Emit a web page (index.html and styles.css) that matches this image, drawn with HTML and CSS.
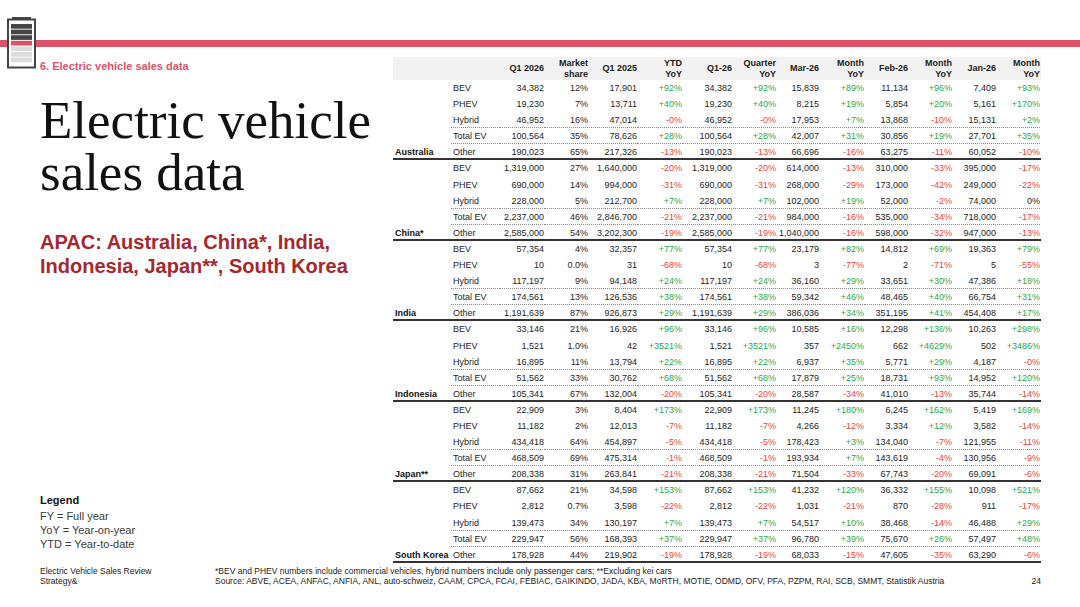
FILE: index.html
```html
<!DOCTYPE html>
<html lang="en">
<head>
<meta charset="utf-8">
<title>Electric vehicle sales data</title>
<link rel="stylesheet" href="styles.css">
</head>
<body>
<div class="band"></div>
<svg class="battery" viewBox="0 0 30 52" width="30" height="52" aria-hidden="true">
  <rect x="5" y="0" width="19" height="2.6" fill="#454545"/>
  <rect x="1" y="2.5" width="27" height="48" fill="#fff" stroke="#454545" stroke-width="2"/>
  <rect x="4" y="7" width="21" height="4.7" fill="#454545"/>
  <rect x="4" y="12.6" width="21" height="4.7" fill="#454545"/>
  <rect x="4" y="18.2" width="21" height="4.7" fill="#454545"/>
  <rect x="4" y="23.8" width="21" height="4.7" fill="#dc5269"/>
  <rect x="4" y="29.4" width="21" height="4.7" fill="#dcdcdc"/>
  <rect x="4" y="35" width="21" height="4.7" fill="#dcdcdc"/>
  <rect x="4" y="40.6" width="21" height="4.7" fill="#dcdcdc"/>
</svg>

<div class="main">
  <div class="left">
    <div class="section">6. Electric vehicle sales data</div>
    <h1 class="title"><span class="tl">Electric vehicle</span><span class="tl">sales data</span></h1>
    <h2 class="subtitle">APAC: Australia, China*, India,<br>Indonesia, Japan**, South Korea</h2>
    <div class="legend">
      <h3>Legend</h3>
      <p>FY = Full year</p>
      <p>YoY = Year-on-year</p>
      <p>YTD = Year-to-date</p>
    </div>
  </div>

  <table class="data">
    <colgroup>
      <col class="w58"><col class="w49"><col class="w45"><col class="w44"><col class="w49"><col class="w45"><col class="w50"><col class="w44"><col class="w43"><col class="w45"><col class="w44"><col class="w44"><col class="w44"><col class="w44">
    </colgroup>
    <thead>
      <tr><th></th><th></th><th>Q1 2026</th><th>Market<br>share</th><th>Q1 2025</th><th>YTD<br>YoY</th><th>Q1-26</th><th>Quarter<br>YoY</th><th>Mar-26</th><th>Month<br>YoY</th><th>Feb-26</th><th>Month<br>YoY</th><th>Jan-26</th><th>Month<br>YoY</th></tr>
    </thead>
    <tbody>
      <tr><td class="c"></td><td class="t">BEV</td><td>34,382</td><td>12%</td><td>17,901</td><td class="g">+92%</td><td>34,382</td><td class="g">+92%</td><td>15,839</td><td class="g">+89%</td><td>11,134</td><td class="g">+96%</td><td>7,409</td><td class="g">+93%</td></tr>
      <tr><td class="c"></td><td class="t">PHEV</td><td>19,230</td><td>7%</td><td>13,711</td><td class="g">+40%</td><td>19,230</td><td class="g">+40%</td><td>8,215</td><td class="g">+19%</td><td>5,854</td><td class="g">+20%</td><td>5,161</td><td class="g">+170%</td></tr>
      <tr class="dot"><td class="c"></td><td class="t">Hybrid</td><td>46,952</td><td>16%</td><td>47,014</td><td class="r">-0%</td><td>46,952</td><td class="r">-0%</td><td>17,953</td><td class="g">+7%</td><td>13,868</td><td class="r">-10%</td><td>15,131</td><td class="g">+2%</td></tr>
      <tr class="dot"><td class="c"></td><td class="t">Total EV</td><td>100,564</td><td>35%</td><td>78,626</td><td class="g">+28%</td><td>100,564</td><td class="g">+28%</td><td>42,007</td><td class="g">+31%</td><td>30,856</td><td class="g">+19%</td><td>27,701</td><td class="g">+35%</td></tr>
      <tr class="end"><td class="c">Australia</td><td class="t">Other</td><td>190,023</td><td>65%</td><td>217,326</td><td class="r">-13%</td><td>190,023</td><td class="r">-13%</td><td>66,696</td><td class="r">-16%</td><td>63,275</td><td class="r">-11%</td><td>60,052</td><td class="r">-10%</td></tr>

      <tr><td class="c"></td><td class="t">BEV</td><td>1,319,000</td><td>27%</td><td>1,640,000</td><td class="r">-20%</td><td>1,319,000</td><td class="r">-20%</td><td>614,000</td><td class="r">-13%</td><td>310,000</td><td class="r">-33%</td><td>395,000</td><td class="r">-17%</td></tr>
      <tr><td class="c"></td><td class="t">PHEV</td><td>690,000</td><td>14%</td><td>994,000</td><td class="r">-31%</td><td>690,000</td><td class="r">-31%</td><td>268,000</td><td class="r">-29%</td><td>173,000</td><td class="r">-42%</td><td>249,000</td><td class="r">-22%</td></tr>
      <tr class="dot"><td class="c"></td><td class="t">Hybrid</td><td>228,000</td><td>5%</td><td>212,700</td><td class="g">+7%</td><td>228,000</td><td class="g">+7%</td><td>102,000</td><td class="g">+19%</td><td>52,000</td><td class="r">-2%</td><td>74,000</td><td>0%</td></tr>
      <tr class="dot"><td class="c"></td><td class="t">Total EV</td><td>2,237,000</td><td>46%</td><td>2,846,700</td><td class="r">-21%</td><td>2,237,000</td><td class="r">-21%</td><td>984,000</td><td class="r">-16%</td><td>535,000</td><td class="r">-34%</td><td>718,000</td><td class="r">-17%</td></tr>
      <tr class="end"><td class="c">China*</td><td class="t">Other</td><td>2,585,000</td><td>54%</td><td>3,202,300</td><td class="r">-19%</td><td>2,585,000</td><td class="r">-19%</td><td>1,040,000</td><td class="r">-16%</td><td>598,000</td><td class="r">-32%</td><td>947,000</td><td class="r">-13%</td></tr>

      <tr><td class="c"></td><td class="t">BEV</td><td>57,354</td><td>4%</td><td>32,357</td><td class="g">+77%</td><td>57,354</td><td class="g">+77%</td><td>23,179</td><td class="g">+82%</td><td>14,812</td><td class="g">+69%</td><td>19,363</td><td class="g">+79%</td></tr>
      <tr><td class="c"></td><td class="t">PHEV</td><td>10</td><td>0.0%</td><td>31</td><td class="r">-68%</td><td>10</td><td class="r">-68%</td><td>3</td><td class="r">-77%</td><td>2</td><td class="r">-71%</td><td>5</td><td class="r">-55%</td></tr>
      <tr class="dot"><td class="c"></td><td class="t">Hybrid</td><td>117,197</td><td>9%</td><td>94,148</td><td class="g">+24%</td><td>117,197</td><td class="g">+24%</td><td>36,160</td><td class="g">+29%</td><td>33,651</td><td class="g">+30%</td><td>47,386</td><td class="g">+18%</td></tr>
      <tr class="dot"><td class="c"></td><td class="t">Total EV</td><td>174,561</td><td>13%</td><td>126,536</td><td class="g">+38%</td><td>174,561</td><td class="g">+38%</td><td>59,342</td><td class="g">+46%</td><td>48,465</td><td class="g">+40%</td><td>66,754</td><td class="g">+31%</td></tr>
      <tr class="end"><td class="c">India</td><td class="t">Other</td><td>1,191,639</td><td>87%</td><td>926,873</td><td class="g">+29%</td><td>1,191,639</td><td class="g">+29%</td><td>386,036</td><td class="g">+34%</td><td>351,195</td><td class="g">+41%</td><td>454,408</td><td class="g">+17%</td></tr>

      <tr><td class="c"></td><td class="t">BEV</td><td>33,146</td><td>21%</td><td>16,926</td><td class="g">+96%</td><td>33,146</td><td class="g">+96%</td><td>10,585</td><td class="g">+16%</td><td>12,298</td><td class="g">+136%</td><td>10,263</td><td class="g">+298%</td></tr>
      <tr><td class="c"></td><td class="t">PHEV</td><td>1,521</td><td>1.0%</td><td>42</td><td class="g">+3521%</td><td>1,521</td><td class="g">+3521%</td><td>357</td><td class="g">+2450%</td><td>662</td><td class="g">+4629%</td><td>502</td><td class="g">+3486%</td></tr>
      <tr class="dot"><td class="c"></td><td class="t">Hybrid</td><td>16,895</td><td>11%</td><td>13,794</td><td class="g">+22%</td><td>16,895</td><td class="g">+22%</td><td>6,937</td><td class="g">+35%</td><td>5,771</td><td class="g">+29%</td><td>4,187</td><td class="r">-0%</td></tr>
      <tr class="dot"><td class="c"></td><td class="t">Total EV</td><td>51,562</td><td>33%</td><td>30,762</td><td class="g">+68%</td><td>51,562</td><td class="g">+68%</td><td>17,879</td><td class="g">+25%</td><td>18,731</td><td class="g">+93%</td><td>14,952</td><td class="g">+120%</td></tr>
      <tr class="end"><td class="c">Indonesia</td><td class="t">Other</td><td>105,341</td><td>67%</td><td>132,004</td><td class="r">-20%</td><td>105,341</td><td class="r">-20%</td><td>28,587</td><td class="r">-34%</td><td>41,010</td><td class="r">-13%</td><td>35,744</td><td class="r">-14%</td></tr>

      <tr><td class="c"></td><td class="t">BEV</td><td>22,909</td><td>3%</td><td>8,404</td><td class="g">+173%</td><td>22,909</td><td class="g">+173%</td><td>11,245</td><td class="g">+180%</td><td>6,245</td><td class="g">+162%</td><td>5,419</td><td class="g">+169%</td></tr>
      <tr><td class="c"></td><td class="t">PHEV</td><td>11,182</td><td>2%</td><td>12,013</td><td class="r">-7%</td><td>11,182</td><td class="r">-7%</td><td>4,266</td><td class="r">-12%</td><td>3,334</td><td class="g">+12%</td><td>3,582</td><td class="r">-14%</td></tr>
      <tr class="dot"><td class="c"></td><td class="t">Hybrid</td><td>434,418</td><td>64%</td><td>454,897</td><td class="r">-5%</td><td>434,418</td><td class="r">-5%</td><td>178,423</td><td class="g">+3%</td><td>134,040</td><td class="r">-7%</td><td>121,955</td><td class="r">-11%</td></tr>
      <tr class="dot"><td class="c"></td><td class="t">Total EV</td><td>468,509</td><td>69%</td><td>475,314</td><td class="r">-1%</td><td>468,509</td><td class="r">-1%</td><td>193,934</td><td class="g">+7%</td><td>143,619</td><td class="r">-4%</td><td>130,956</td><td class="r">-9%</td></tr>
      <tr class="end"><td class="c">Japan**</td><td class="t">Other</td><td>208,338</td><td>31%</td><td>263,841</td><td class="r">-21%</td><td>208,338</td><td class="r">-21%</td><td>71,504</td><td class="r">-33%</td><td>67,743</td><td class="r">-20%</td><td>69,091</td><td class="r">-6%</td></tr>

      <tr><td class="c"></td><td class="t">BEV</td><td>87,662</td><td>21%</td><td>34,598</td><td class="g">+153%</td><td>87,662</td><td class="g">+153%</td><td>41,232</td><td class="g">+120%</td><td>36,332</td><td class="g">+155%</td><td>10,098</td><td class="g">+521%</td></tr>
      <tr><td class="c"></td><td class="t">PHEV</td><td>2,812</td><td>0.7%</td><td>3,598</td><td class="r">-22%</td><td>2,812</td><td class="r">-22%</td><td>1,031</td><td class="r">-21%</td><td>870</td><td class="r">-28%</td><td>911</td><td class="r">-17%</td></tr>
      <tr class="dot"><td class="c"></td><td class="t">Hybrid</td><td>139,473</td><td>34%</td><td>130,197</td><td class="g">+7%</td><td>139,473</td><td class="g">+7%</td><td>54,517</td><td class="g">+10%</td><td>38,468</td><td class="r">-14%</td><td>46,488</td><td class="g">+29%</td></tr>
      <tr class="dot"><td class="c"></td><td class="t">Total EV</td><td>229,947</td><td>56%</td><td>168,393</td><td class="g">+37%</td><td>229,947</td><td class="g">+37%</td><td>96,780</td><td class="g">+39%</td><td>75,670</td><td class="g">+26%</td><td>57,497</td><td class="g">+48%</td></tr>
      <tr class="end"><td class="c">South Korea</td><td class="t">Other</td><td>178,928</td><td>44%</td><td>219,902</td><td class="r">-19%</td><td>178,928</td><td class="r">-19%</td><td>68,033</td><td class="r">-15%</td><td>47,605</td><td class="r">-35%</td><td>63,290</td><td class="r">-6%</td></tr>
    </tbody>
  </table>
</div>

<div class="footer">
  <div class="fleft">
    <p>Electric Vehicle Sales Review</p>
    <p>Strategy&amp;</p>
  </div>
  <div class="fnote">
    <p>*BEV and PHEV numbers include commercial vehicles, hybrid numbers include only passenger cars; **Excluding kei cars</p>
    <p>Source: ABVE, ACEA, ANFAC, ANFIA, ANL, auto-schweiz, CAAM, CPCA, FCAI, FEBIAC, GAIKINDO, JADA, KBA, MoRTH, MOTIE, ODMD, OFV, PFA, PZPM, RAI, SCB, SMMT, Statistik Austria</p>
  </div>
  <div class="pnum">24</div>
</div>
</body>
</html>
```

FILE: styles.css
```css
* { box-sizing: border-box; margin: 0; padding: 0; }

html, body {
  width: 1080px;
  height: 607px;
  overflow: hidden;
  background: #fff;
}

body {
  position: relative;
  font-family: "Liberation Sans", Arial, sans-serif;
  color: #222;
}

.band {
  height: 7px;
  margin-top: 40px;
  background: #dc5269;
}

.battery {
  position: absolute;
  left: 7px;
  top: 17px;
  width: 30px;
  height: 52px;
}

.main {
  display: flex;
  height: 506px;
  margin-top: 10px;
}

.left {
  width: 393px;
  flex: none;
  display: flex;
  flex-direction: column;
  padding-left: 40px;
}

.section {
  padding-top: 3px;
  font-size: 11px;
  line-height: 13px;
  font-weight: bold;
  color: #d9536a;
}

.title {
  margin-top: 21px;
  font-family: "Liberation Serif", "Times New Roman", serif;
  font-weight: normal;
  font-size: 53px;
  line-height: 52px;
  color: #111;
}

.title .tl {
  display: block;
  height: 52px;
  line-height: 52px;
}

.subtitle {
  margin-top: 32px;
  font-size: 20px;
  line-height: 24px;
  font-weight: bold;
  color: #a6282e;
}

.legend {
  margin-top: auto;
  padding-bottom: 12px;
  font-size: 11px;
  line-height: 14px;
}

.legend h3 {
  font-size: 11px;
  font-weight: bold;
  color: #111;
  margin-bottom: 2.5px;
}

.legend p {
  color: #3a3a3a;
}

/* data table */
.data {
  flex: none;
  width: 648px;
  table-layout: fixed;
  border-collapse: separate;
  border-spacing: 0;
  font-size: 9px;
  align-self: flex-start;
}

.w58 { width: 58px; }
.w49 { width: 49px; }
.w50 { width: 50px; }
.w45 { width: 45px; }
.w44 { width: 44px; }
.w43 { width: 43px; }

.data th {
  height: 23px;
  padding: 0 1px 0 0;
  background: #f2f2f2;
  font-weight: bold;
  font-size: 9px;
  line-height: 10.5px;
  text-align: right;
  vertical-align: middle;
  color: #1a1a1a;
}

.data td {
  height: 16.1px;
  padding: 0 1px 0 0;
  line-height: 16.1px;
  text-align: right;
  white-space: nowrap;
  color: #1e1e1e;
}

.data td.c {
  text-align: left;
  padding-left: 2px;
  font-weight: bold;
  color: #111;
}

.data td.t {
  text-align: left;
  padding-left: 2px;
}

.data td.g { color: #1faa4e; }
.data td.r { color: #e8453c; }

.data tr.dot td + td {
  background-image: linear-gradient(to right, #8a8a8a 50%, transparent 50%);
  background-size: 2px 1px;
  background-repeat: repeat-x;
  background-position: left bottom;
}

.data tr.end td {
  box-shadow: inset 0 -2px 0 #333;
}

/* footer */
.footer {
  display: flex;
  padding: 2.5px 39px 0 40px;
  font-size: 8.5px;
  line-height: 10.5px;
  color: #222;
}

.fleft {
  width: 175px;
  flex: none;
}

.fnote {
  flex: 1;
}

.pnum {
  padding-top: 10.5px;
}
```
